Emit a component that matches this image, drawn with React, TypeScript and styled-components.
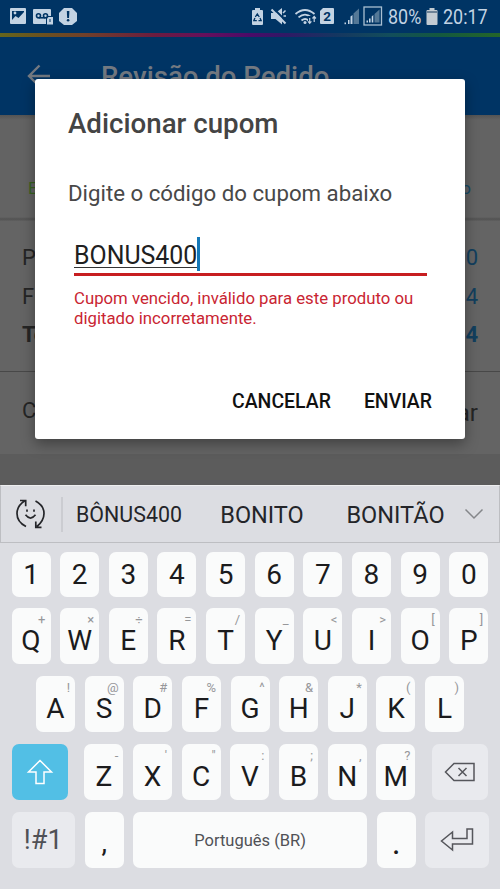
import React from "react";
import styled, { createGlobalStyle } from "styled-components";

const GlobalStyle = createGlobalStyle`
  * { box-sizing: border-box; }
  body { margin: 0; overflow: hidden; background: #dcdde2; font-family: Roboto, "Noto Sans", sans-serif; }
`;

const Screen = styled.main`
  position: relative;
  width: 500px;
  height: 889px;
  overflow: hidden;
  display: flex;
  flex-direction: column;
`;

const StatusBar = styled.div`
  height: 33px;
  flex: none;
  display: flex;
  justify-content: space-between;
  align-items: flex-start;
  background: #003464;
  color: #c3d3e3;
`;

const Glyph = styled.svg`
  display: block;
  flex: none;
`;

const StatusRight = styled.div`
  display: flex;
  width: 252px;
`;

const StatusText = styled.span<{ $width: number }>`
  width: ${(p) => p.$width}px;
  font-size: 20.6px;
  line-height: 35px;
  white-space: nowrap;
  transform: scaleX(0.87);
  transform-origin: 0 50%;
`;

const RainbowLine = styled.div`
  height: 4px;
  flex: none;
  background: linear-gradient(90deg, #65651d 0%, #6b5020 9%, #70402a 17%, #6b1c40 31%, #65105c 41%, #4a0b68 50%, #301965 57%, #153661 67%, #124d5b 78%, #14583f 88%, #246529 100%);
`;

const AppBar = styled.header`
  height: 78px;
  flex: none;
  display: flex;
  align-items: center;
  padding: 0 0 0 27px;
  background: #003464;
  color: #737981;
`;

const AppTitle = styled.h1`
  margin: 2px 0 0 50px;
  font-size: 27.6px;
  line-height: 32px;
  font-weight: 500;
  white-space: nowrap;
`;

const Page = styled.section`
  height: 370px;
  flex: none;
  background: #5c5c5c;
`;

const Steps = styled.div`
  height: 106px;
  display: flex;
  justify-content: space-between;
  padding: 63px 29px 0 28px;
  background: linear-gradient(#545454 0, #636363 5px, #636363 102px, #525252 104px, #606060 106px);
  font-size: 17px;
  line-height: 20px;
`;

const StepLabel = styled.span<{ $color: string }>`
  color: ${(p) => p.$color};
`;

const Totals = styled.div`
  height: 151px;
  padding: 18px 22px 0 22px;
  background: #646464;
  border-bottom: 1px solid #484848;
`;

const Line = styled.div<{ $bold?: boolean }>`
  display: flex;
  justify-content: space-between;
  height: 38.7px;
  font-size: 22px;
  line-height: 38px;
  color: #252525;
  font-weight: ${(p) => (p.$bold ? 700 : 400)};
`;

const Amount = styled.span`
  color: #123f5e;
`;

const CouponRow = styled.div`
  height: 82px;
  display: flex;
  justify-content: space-between;
  padding: 20px 22px 0;
  font-size: 22px;
  line-height: 38px;
  color: #252525;
  background: #646464;
`;

const CouponAction = styled.span`
  padding-top: 2px;
  font-size: 24px;
`;

const Dialog = styled.div`
  position: absolute;
  left: 35px;
  top: 79px;
  width: 430px;
  height: 360px;
  padding: 29px 33px 0;
  border-radius: 3px;
  background: #fff;
  box-shadow: 0 5px 14px rgba(0, 0, 0, 0.36);
`;

const DialogTitle = styled.h2`
  margin: 0;
  font-size: 27.7px;
  line-height: 32px;
  font-weight: 500;
  color: #444;
  white-space: nowrap;
`;

const DialogText = styled.p`
  margin: 37px 0 0;
  font-size: 22.25px;
  line-height: 32px;
  color: #484848;
  white-space: nowrap;
`;

const Field = styled.div`
  margin: 28px 5px 0 6px;
  height: 39px;
  display: flex;
  border-bottom: 3px solid #c71e20;
`;

const FieldValue = styled.span`
  height: 31px;
  border-bottom: 1px solid #333;
  font-size: 24.9px;
  line-height: 37px;
  color: #202020;
`;

const Caret = styled.span`
  width: 3px;
  height: 34px;
  background: #1478b8;
`;

const ErrorText = styled.p`
  margin: 13px 0 0 6px;
  font-size: 16.75px;
  line-height: 19.5px;
  color: #c92532;
  white-space: nowrap;
`;

const Actions = styled.div`
  display: flex;
  justify-content: flex-end;
  gap: 33px;
  margin-top: 60px;
`;

const Action = styled.button`
  padding: 0;
  border: 0;
  background: none;
  font: 500 19.45px/28px Roboto, sans-serif;
  color: #111;
`;

const Keyboard = styled.section`
  height: 404px;
  flex: none;
  background: #dcdde2;
`;

const Suggestions = styled.div`
  height: 58px;
  display: flex;
  align-items: center;
  padding-left: 13px;
  border: 1px solid #bdbec2;
  border-top-color: #eeeeef;
  color: #242529;
`;

const Divider = styled.span`
  width: 1.5px;
  height: 35px;
  margin-left: 13px;
  background: #cbccd1;
`;

const Suggestion = styled.span<{ $size: number; $width: number }>`
  width: ${(p) => p.$width}px;
  flex: none;
  padding-top: 1px;
  font-size: ${(p) => p.$size}px;
  line-height: 32px;
  text-align: center;
  white-space: nowrap;
`;

const Keys = styled.div`
  display: flex;
  flex-direction: column;
  gap: 11.2px;
  padding: 9px 11.5px 0;
`;

const Row = styled.div<{ $height?: number; $inset?: number }>`
  display: flex;
  gap: 9.65px;
  height: ${(p) => p.$height ?? 56.8}px;
  padding-left: ${(p) => p.$inset ?? 0}px;
`;

type Tone = "plain" | "soft" | "active";
const tones: Record<Tone, string> = { plain: "#fafbfb", soft: "#e9eaee", active: "#52bfe5" };

const KeyCap = styled.button<{
  $width?: number;
  $tone?: Tone;
  $before?: number;
  $drop?: number;
  $size?: number;
  $color?: string;
}>`
  position: relative;
  flex: none;
  width: ${(p) => p.$width ?? 39}px;
  height: 100%;
  margin: 0 0 0 ${(p) => p.$before ?? 0}px;
  padding: ${(p) => p.$drop ?? 0}px 0 0;
  display: flex;
  align-items: center;
  justify-content: center;
  border: 0;
  border-radius: 7px;
  background: ${(p) => tones[p.$tone ?? "plain"]};
  font-family: Roboto, sans-serif;
  font-size: ${(p) => p.$size ?? 28}px;
  line-height: 1;
  color: ${(p) => p.$color ?? "#1b1b1d"};
`;

const Hint = styled.span`
  position: absolute;
  top: 5px;
  right: 5px;
  font-size: 13px;
  line-height: 13px;
  color: #96979a;
`;

const Letters = ({ letters, hints, before = 0 }: { letters: string; hints: string[]; before?: number }) => (
  <>
    {letters.split("").map((l, i) => (
      <KeyCap key={l} $drop={9} $before={i === 0 ? before : 0}>
        <Hint>{hints[i]}</Hint>
        {l}
      </KeyCap>
    ))}
  </>
);

const NotificationIcons = () => (
  <Glyph width="90" height="33" viewBox="0 0 90 33" fill="#c3d3e3">
    <path fillRule="evenodd" d="M11 8h14q1 0 1 1v14q0 1-1 1H11q-1 0-1-1V9q0-1 1-1Zm1 3v10h12V11Z" />
    <path d="M12 20l3.5-4 3 2 5.5-6v10H12Z" />
    <circle cx="15" cy="13" r="1.4" />
    <path d="M34 9h16q1 0 1 1v6h-3l-2 2v6H34q-1 0-1-1V10q0-1 1-1Z" />
    <g fill="none" stroke="#003464" strokeWidth="1.6">
      <circle cx="38.5" cy="15.7" r="2" />
      <circle cx="45.5" cy="15.7" r="2" />
      <path d="M38.5 17.8h7" />
    </g>
    <path d="M48.5 17H53v7.5h-6V18.5Z" />
    <path d="M50 19v3" stroke="#003464" strokeWidth="1" />
    <path d="M64 8h8l5 5v8l-5 4h-8l-5-4v-8Z" />
    <path d="M66.8 11h2.6l-.4 7h-1.8Z" fill="#003464" />
    <circle cx="68.1" cy="20.3" r="1.3" fill="#003464" />
  </Glyph>
);

const SystemIcons = () => (
  <Glyph width="140" height="33" viewBox="248 0 140 33" fill="#c3d3e3">
    <path d="M255 8h5v2h2q1 0 1 1v13q0 1-1 1h-9q-1 0-1-1V11q0-1 1-1h2Z" />
    <path d="M255.3 17l2-3 2 3M260 18l1.2 2.7h-2.7M256.8 20.7h-3l1.1-2.7" fill="none" stroke="#003464" strokeWidth="1.3" />
    <path d="M271 13h4.500l6.500-5v16.500l-6.500-5.500h-4.500Z" />
    <path d="M273 8L288 23" stroke="#003464" strokeWidth="2" />
    <path d="M271.500 9.500L285.500 23.500" stroke="#c3d3e3" strokeWidth="2" />
    <path d="M283 13l2.500-2.500M283.500 16h2.500" stroke="#c3d3e3" strokeWidth="1.500" />
    <g fill="none" stroke="#c3d3e3" strokeWidth="1.8">
      <path d="M295.5 14q9.5-8 19 0M298.5 17.4q6.5-5.5 13 0M301.5 20.5q3.7-3 7 0" />
    </g>
    <circle cx="305" cy="22.5" r="1.5" />
    <path d="M308 16h8v9h-8Z" fill="#003464" />
    <path d="M309.7 18v5.5M308 21.3l1.7 2 1.7-2M314.2 22v-5.5M312.5 18.5l1.7-2 1.7 2" fill="none" stroke="#c3d3e3" strokeWidth="1.2" />
    <path d="M323 8h10q1 0 1 1v14q0 1-1 1h-12q-1 0-1-1V11Z" />
    <text x="327" y="21.3" fontSize="13.5" fontWeight="700" fontFamily="Roboto, sans-serif" textAnchor="middle" fill="#003464">2</text>
    <rect x="344.5" y="22.5" width="1.5" height="1.7" />
    <rect x="348" y="20" width="1.5" height="4" />
    <path d="M350.5 16.5l2-1.5v9h-2Z" />
    <path d="M353.5 13.5l5.5-5V24h-5.5Z" fill="#547897" />
    <rect x="364" y="7" width="17.5" height="18" fill="none" stroke="#a9bfd2" strokeWidth="1.3" />
    <rect x="366.5" y="20.5" width="1.5" height="2" />
    <rect x="369" y="18.5" width="1.6" height="4" />
    <path d="M371.7 16.5l1.6-1.5v7.5h-1.6Z" />
    <path d="M374.5 14l5-4.5v13h-5Z" fill="#547897" />
  </Glyph>
);

const digits = "1234567890".split("");

export default function App() {
  return (
    <Screen>
      <GlobalStyle />
      <StatusBar>
        <NotificationIcons />
        <StatusRight>
          <SystemIcons />
          <StatusText $width={35}>80%</StatusText>
          <Glyph width="20" height="33" viewBox="423 0 20 33">
            <path d="M429.5 8h5v2h2q1 0 1 1v13q0 1-1 1h-9q-1 0-1-1V11q0-1 1-1h2Z" fill="#c3cbd2" />
            <path d="M427 11h10v2h-10Z" fill="#6d8296" />
          </Glyph>
          <StatusText $width={50}>20:17</StatusText>
        </StatusRight>
      </StatusBar>
      <RainbowLine />
      <AppBar>
        <Glyph width="24" height="24" viewBox="0 0 24 24" fill="none" stroke="currentColor" strokeWidth="2.4">
          <path d="M23 12H3M12.5 1.5L2 12l10.5 10.5" />
        </Glyph>
        <AppTitle>Revisão do Pedido</AppTitle>
      </AppBar>
      <Page>
        <Steps>
          <StepLabel $color="#39621f">Entrega</StepLabel>
          <StepLabel $color="#174b67">Revisão</StepLabel>
        </Steps>
        <Totals>
          <Line><span>Produto</span><Amount>0</Amount></Line>
          <Line><span>Frete</span><Amount>4</Amount></Line>
          <Line $bold><span>Total</span><Amount>4</Amount></Line>
        </Totals>
        <CouponRow>
          <span>Cupom</span>
          <CouponAction>Adicionar</CouponAction>
        </CouponRow>
      </Page>

      <Keyboard>
        <Suggestions>
          <Glyph width="34" height="34" viewBox="14 497 34 34" fill="none" stroke="#242529" strokeWidth="1.7">
            <path d="M26 526.5Q17 522 17 513.5Q17 506 24.5 501M20 500.5h5.7v5.7M35.5 501Q44 505.5 44 513.5Q44 520.5 37 526.5M41.5 527.3h-5.7v-5.7" />
            <path d="M25.5 514.8q5 6.5 10 0" />
            <path d="M27 509.5v2.2M34 509.5v2.2" />
          </Glyph>
          <Divider />
          <Suggestion $size={21.4} $width={133}>BÔNUS400</Suggestion>
          <Suggestion $size={23.5} $width={133}>BONITO</Suggestion>
          <Suggestion $size={23.5} $width={134}>BONITÃO</Suggestion>
          <Glyph width="22" height="16" viewBox="0 0 22 16" fill="none" stroke="#85868a" strokeWidth="1.5">
            <path d="M2.5 3.5l8.5 8.5 8.5-8.5" />
          </Glyph>
        </Suggestions>
        <Keys>
          <Row $height={44.5}>
            {digits.map((d) => <KeyCap key={d} $drop={2}>{d}</KeyCap>)}
          </Row>
          <Row>
            <Letters letters="QWERTYUIOP" hints={["+", "×", "÷", "=", "/", "_", "<", ">", "[", "]"]} />
          </Row>
          <Row $inset={24.5}>
            <Letters letters="ASDFGHJKL" hints={["!", "@", "#", "%", "^", "&", "*", "(", ")"]} />
          </Row>
          <Row>
            <KeyCap $width={56.5} $tone="active" aria-label="Shift">
              <Glyph width="28" height="28" viewBox="0 0 28 28" fill="none" stroke="#fff" strokeWidth="1.5">
                <path d="M14 2.5L25.5 14H18v11.5h-8V14H2.5Z" />
              </Glyph>
            </KeyCap>
            <Letters letters="ZXCVBNM" hints={["-", "'", "\"", ":", ";", ",", "?"]} before={6.8} />
            <KeyCap $width={56} $tone="soft" $before={7} aria-label="Apagar">
              <Glyph width="32" height="22" viewBox="0 0 32 22" fill="none" stroke="#55565b" strokeWidth="1.5">
                <path d="M10 2.500h20v17H10L1.500 11ZM14.500 7l8 8M22.500 7l-8 8" />
              </Glyph>
            </KeyCap>
          </Row>
          <Row>
            <KeyCap $width={63.5} $tone="soft" $size={27} $color="#505156" $drop={1}>!#1</KeyCap>
            <KeyCap $drop={6}>,</KeyCap>
            <KeyCap $width={233.7} $size={16.5} $color="#505156" $drop={2}>Português (BR)</KeyCap>
            <KeyCap $drop={4} $size={34}>.</KeyCap>
            <KeyCap $width={63.5} $tone="soft" aria-label="Enter">
              <Glyph width="34" height="26" viewBox="0 0 34 26" fill="none" stroke="#55565b" strokeWidth="1.5">
                <path d="M27 2h5.500v15H12.500v6L1.500 14l11-9v6.500H27Z" />
              </Glyph>
            </KeyCap>
          </Row>
        </Keys>
      </Keyboard>

      <Dialog role="dialog">
        <DialogTitle>Adicionar cupom</DialogTitle>
        <DialogText>Digite o código do cupom abaixo</DialogText>
        <Field>
          <FieldValue>BONUS400</FieldValue>
          <Caret />
        </Field>
        <ErrorText>
          Cupom vencido, inválido para este produto ou
          <br />
          digitado incorretamente.
        </ErrorText>
        <Actions>
          <Action>CANCELAR</Action>
          <Action>ENVIAR</Action>
        </Actions>
      </Dialog>
    </Screen>
  );
}
